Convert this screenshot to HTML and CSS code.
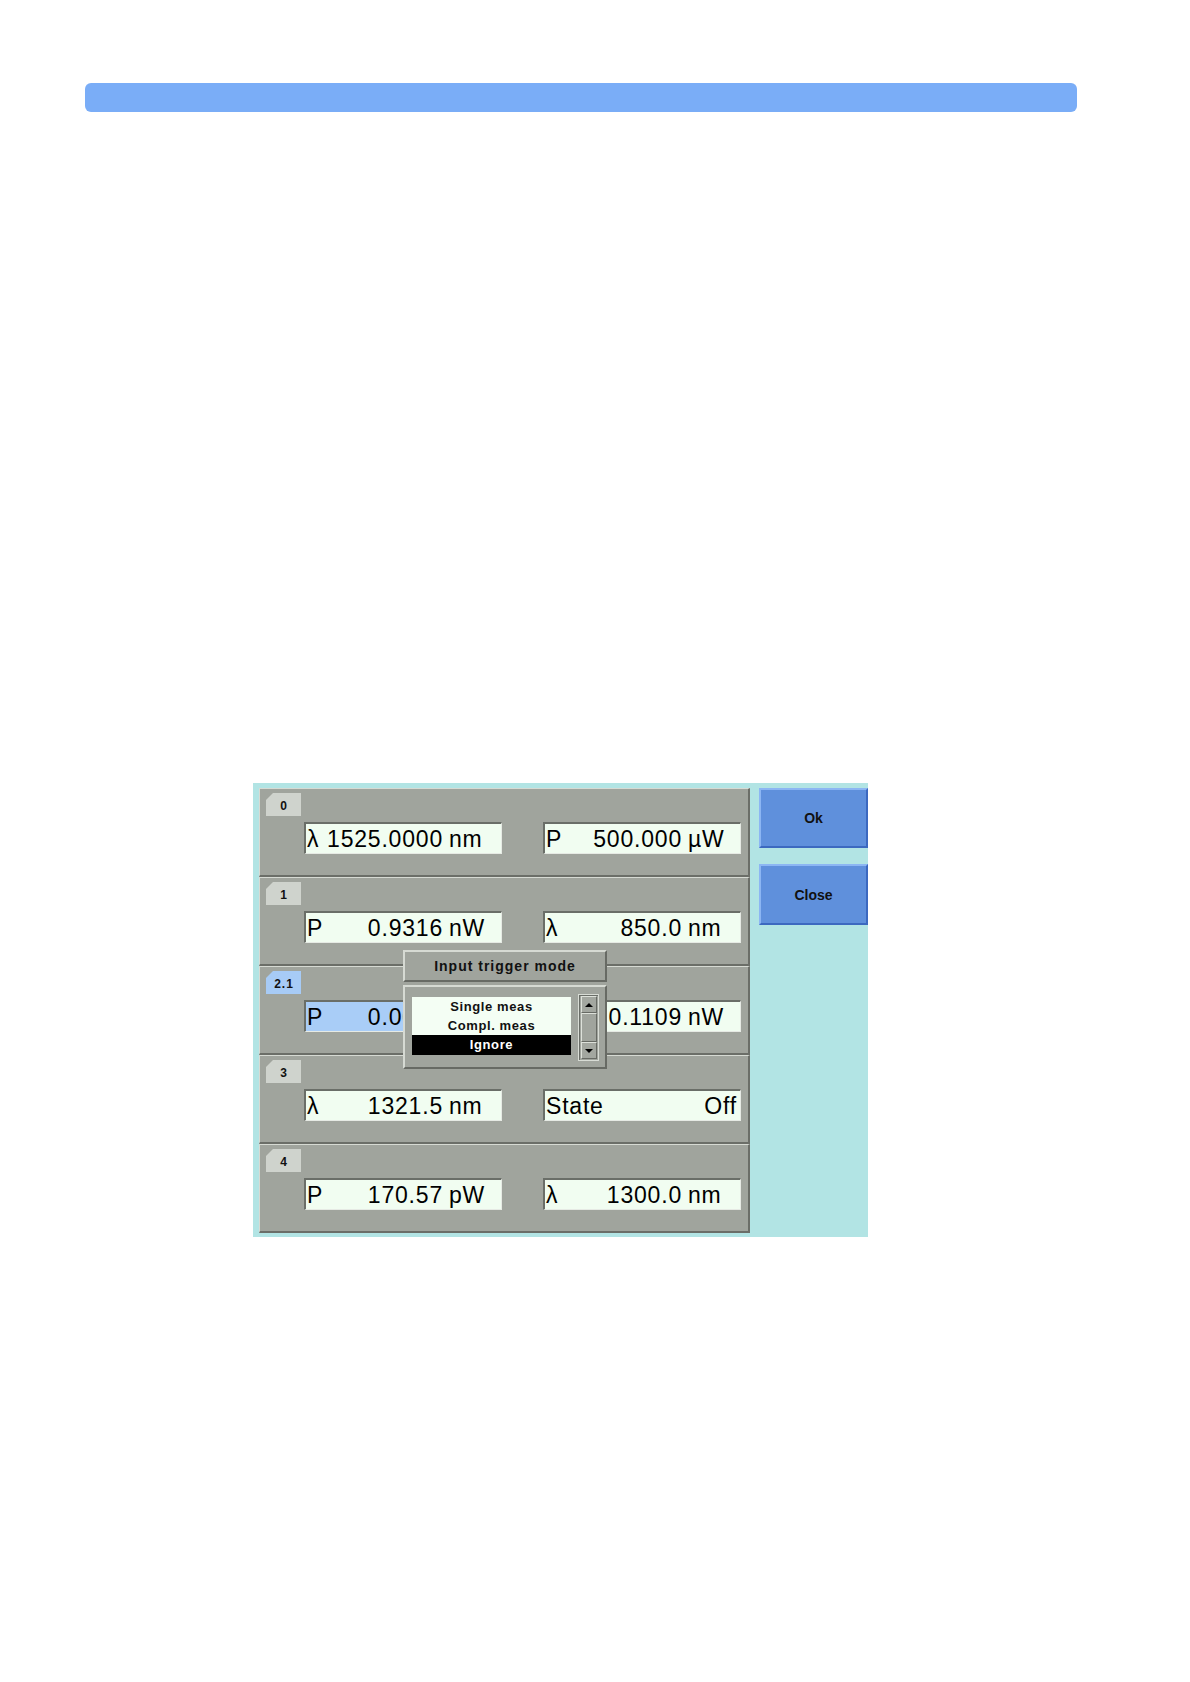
FILE: index.html
```html
<!DOCTYPE html>
<html>
<head>
<meta charset="utf-8">
<title>Trigger</title>
<link rel="stylesheet" href="styles.css">
</head>
<body>
<div class="page">
  <div class="topbar"></div>
  <div class="screen">
    <div class="panel">
      <div class="row">
        <div class="tab">0</div>
        <div class="fields">
          <div class="field"><span class="lbl">λ</span><span class="val">1525.0000</span><span class="unit">nm</span></div>
          <div class="field"><span class="lbl">P</span><span class="val">500.000</span><span class="unit">µW</span></div>
        </div>
      </div>
      <div class="row">
        <div class="tab">1</div>
        <div class="fields">
          <div class="field"><span class="lbl">P</span><span class="val">0.9316</span><span class="unit">nW</span></div>
          <div class="field"><span class="lbl">λ</span><span class="val">850.0</span><span class="unit">nm</span></div>
        </div>
      </div>
      <div class="row">
        <div class="tab tab-sel">2.1</div>
        <div class="fields">
          <div class="field field-sel"><span class="lbl">P</span><span class="val">0.0000</span><span class="unit">nW</span></div>
          <div class="field"><span class="lbl">P</span><span class="val">0.1109</span><span class="unit">nW</span></div>
        </div>
      </div>
      <div class="row">
        <div class="tab">3</div>
        <div class="fields">
          <div class="field"><span class="lbl">λ</span><span class="val">1321.5</span><span class="unit">nm</span></div>
          <div class="field"><span class="lbl">State</span><span class="val val-end">Off</span></div>
        </div>
      </div>
      <div class="row">
        <div class="tab">4</div>
        <div class="fields">
          <div class="field"><span class="lbl">P</span><span class="val">170.57</span><span class="unit">pW</span></div>
          <div class="field"><span class="lbl">λ</span><span class="val">1300.0</span><span class="unit">nm</span></div>
        </div>
      </div>
    </div>
    <div class="side">
      <div class="btn btn-ok">Ok</div>
      <div class="btn btn-close">Close</div>
    </div>
    <div class="dialog">
      <div class="dlg-title">Input trigger mode</div>
      <div class="dlg-body">
        <div class="list">
          <div class="item">Single meas</div>
          <div class="item">Compl. meas</div>
          <div class="item item-sel">Ignore</div>
        </div>
        <div class="scroll">
          <div class="sbtn"><span class="tri-up"></span></div>
          <div class="strack"></div>
          <div class="sbtn"><span class="tri-down"></span></div>
        </div>
      </div>
    </div>
  </div>
</div>
</body>
</html>
```
FILE: styles.css
```css
html, body {
  margin: 0;
  padding: 0;
  background: #ffffff;
}
.page {
  width: 1190px;
  min-height: 1682px;
  font-family: "Liberation Sans", Arial, sans-serif;
  overflow: hidden;
}
.topbar {
  margin: 83px 0 0 85px;
  width: 992px;
  height: 29px;
  border-radius: 6px;
  background: #7aadf7;
}
.screen {
  position: relative;
  margin: 671px 0 0 253px;
  width: 615px;
  height: 454px;
  box-sizing: border-box;
  padding: 5px 0 0 6px;
  background: #b2e4e4;
  display: flex;
  gap: 9px;
}
.panel {
  width: 491px;
  display: flex;
  flex-direction: column;
}
.row {
  box-sizing: border-box;
  height: 89px;
  background: #a0a49d;
  border-top: 1px solid #d6dad3;
  border-left: 1px solid #d6dad3;
  border-right: 2px solid #6b6e68;
  border-bottom: 2px solid #6b6e68;
  padding: 4px 0 0 6px;
}
.tab {
  width: 35px;
  height: 23px;
  background: #cfd3cd;
  clip-path: polygon(7px 0, 100% 0, 100% 100%, 0 100%, 0 7px);
  font-weight: bold;
  font-size: 12px;
  letter-spacing: 1px;
  text-indent: 1px;
  line-height: 27px;
  text-align: center;
  color: #111;
}
.tab-sel {
  background: #a7cbf6;
}
.fields {
  display: flex;
  gap: 41px;
  margin-top: 6px;
  padding-left: 38px;
}
.field {
  box-sizing: border-box;
  width: 198px;
  height: 32px;
  background: #f1fdf1;
  border-top: 2px solid #6a6e68;
  border-left: 2px solid #6a6e68;
  border-right: 1px solid #e6eae4;
  border-bottom: 1px solid #e6eae4;
  display: flex;
  align-items: center;
  padding-left: 1px;
  font-size: 23px;
  letter-spacing: 0.8px;
  line-height: 28px;
  color: #000;
  white-space: nowrap;
}
.field-sel {
  background: #a9cdf7;
}
.lbl {
  flex: none;
}
.val {
  flex: 1;
  text-align: right;
}
.val-end {
  padding-right: 3px;
}
.unit {
  flex: none;
  box-sizing: border-box;
  width: 58px;
  padding-left: 6px;
}
.side {
  display: flex;
  flex-direction: column;
  gap: 16px;
}
.btn {
  box-sizing: border-box;
  width: 109px;
  height: 60px;
  background: #5f90dc;
  border-top: 2px solid #8cb6f3;
  border-left: 2px solid #8cb6f3;
  border-right: 2px solid #3c69c0;
  border-bottom: 2px solid #3c69c0;
  display: flex;
  align-items: center;
  justify-content: center;
  font-weight: bold;
  font-size: 14px;
  color: #111;
}
.btn-close {
  height: 61px;
}
.dialog {
  position: absolute;
  left: 150px;
  top: 167px;
  width: 204px;
}
.dlg-title {
  box-sizing: border-box;
  height: 32px;
  background: #a0a49d;
  border-top: 2px solid #d6dad3;
  border-left: 2px solid #d6dad3;
  border-right: 2px solid #676a64;
  border-bottom: 2px solid #676a64;
  font-weight: bold;
  font-size: 14px;
  letter-spacing: 1px;
  line-height: 28px;
  text-align: center;
  color: #111;
}
.dlg-body {
  box-sizing: border-box;
  margin-top: 3px;
  height: 84px;
  background: #a0a49d;
  border-top: 2px solid #d6dad3;
  border-left: 2px solid #d6dad3;
  border-right: 2px solid #676a64;
  border-bottom: 2px solid #676a64;
  padding: 10px 0 0 7px;
  display: flex;
  align-items: flex-start;
}
.list {
  width: 159px;
  background: #f4fef4;
  display: flex;
  flex-direction: column;
}
.item {
  height: 19px;
  line-height: 19px;
  text-align: center;
  font-weight: bold;
  font-size: 13px;
  letter-spacing: 0.6px;
  color: #111;
  overflow: hidden;
}
.item-sel {
  height: 20px;
  line-height: 20px;
  background: #000;
  color: #fff;
}
.scroll {
  box-sizing: border-box;
  margin: -3px 0 0 7px;
  width: 21px;
  height: 67px;
  border: 1px solid #d8dcd5;
  box-shadow: inset 1px 1px 0 #6a6e68;
  padding: 1px 1px 1px 2px;
  display: flex;
  flex-direction: column;
}
.sbtn {
  box-sizing: border-box;
  height: 17px;
  background: #a3a7a0;
  border-top: 1px solid #dde1da;
  border-left: 1px solid #dde1da;
  border-right: 1px solid #676a64;
  border-bottom: 1px solid #676a64;
  display: flex;
  align-items: center;
  justify-content: center;
}
.strack {
  flex: 1;
  background: #a0a49d;
  border-top: 1px solid #dde1da;
  border-left: 1px solid #dde1da;
  border-right: 1px solid #676a64;
  border-bottom: 1px solid #676a64;
}
.tri-up {
  width: 0;
  height: 0;
  border-left: 4px solid transparent;
  border-right: 4px solid transparent;
  border-bottom: 4px solid #000;
}
.tri-down {
  width: 0;
  height: 0;
  border-left: 4px solid transparent;
  border-right: 4px solid transparent;
  border-top: 4px solid #000;
}
```
